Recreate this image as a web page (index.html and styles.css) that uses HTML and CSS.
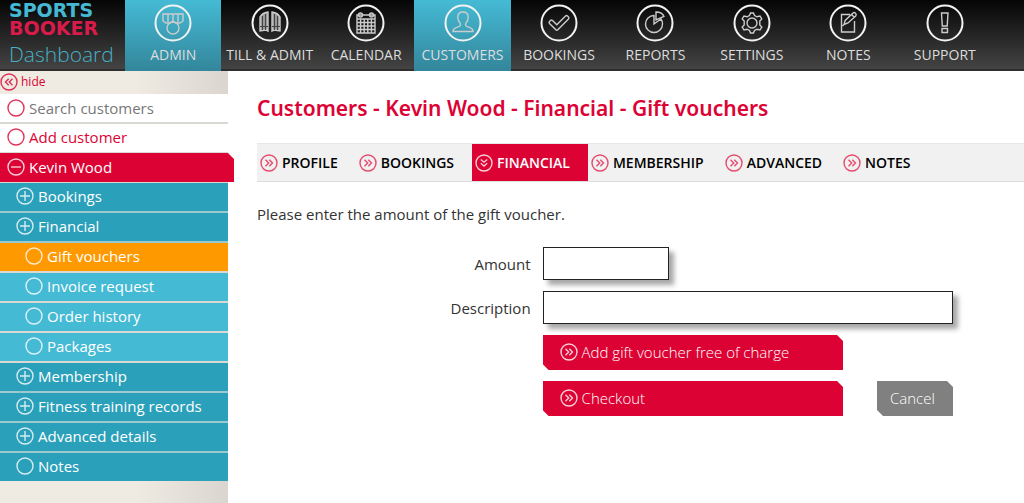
FILE: index.html
```html
<!DOCTYPE html>
<html lang="en">
<head>
  <meta charset="UTF-8" />
  <meta name="viewport" content="width=device-width, initial-scale=1.0"/>
  <title>Sports Booker Dashboard - Gift vouchers</title>
  <link rel="stylesheet" href="styles.css">
</head>
<body>
  <!-- shared icons -->
  <svg width="0" height="0" class="sprite" aria-hidden="true">
    <symbol id="ring" viewBox="0 0 18 18"><circle cx="9" cy="9" r="8"/></symbol>
    <symbol id="plus" viewBox="0 0 18 18"><circle cx="9" cy="9" r="8"/><path d="M4 9h10M9 4v10"/></symbol>
    <symbol id="minus" viewBox="0 0 18 18"><circle cx="9" cy="9" r="8"/><path d="M4 9h10"/></symbol>
    <symbol id="right" viewBox="0 0 18 18"><circle cx="9" cy="9" r="8"/><path d="M5.5 5.8L8.7 9l-3.2 3.2M9.3 5.8L12.5 9l-3.2 3.2"/></symbol>
    <symbol id="left" viewBox="0 0 18 18"><circle cx="9" cy="9" r="8"/><path d="M8.7 5.8L5.5 9l3.2 3.2M12.5 5.8L9.3 9l3.2 3.2"/></symbol>
    <symbol id="down" viewBox="0 0 18 18"><circle cx="9" cy="9" r="8"/><path d="M5.8 5.5L9 8.2l3.2-2.7M5.8 9.3L9 12l3.2-2.7"/></symbol>
  </svg>

  <header class="topbar">
    <a href="#" class="brand">
      <span class="sports">SPORTS</span>
      <span class="booker">BOOKER</span>
      <span class="dashboard">Dashboard</span>
    </a>
    <nav class="topnav">
      <a href="#" class="active">
        <svg viewBox="0 0 38 38"><circle class="rim" cx="19" cy="19" r="17.5"/><path d="M9 10h20v7l-3 2h-4l-3-2-3 2h-4l-3-2zM14 10v8M19 10v7M24 10v8"/><circle cx="19" cy="24" r="6"/></svg>
        ADMIN
      </a>
      <a href="#">
        <svg viewBox="0 0 38 38"><circle class="rim" cx="19" cy="19" r="17.5"/><path class="door" d="M9 27V13q2-4 8-5v19l-2-1zM29 27V13q-2-4-8-5v19l2-1z"/><path class="dark" d="M11.500 12v14M14.500 10v16M23.500 10v16M26.500 12v14M9 22.500h8M21 22.500h8"/></svg>
        TILL &amp; ADMIT
      </a>
      <a href="#">
        <svg viewBox="0 0 38 38"><circle class="rim" cx="19" cy="19" r="17.5"/><path d="M10 11h18v18H10zM10 15h18M10 18.500h18M10 22h18M10 25.500h18M13.600 15v14M17.200 15v14M20.800 15v14M24.400 15v14"/><circle cx="13.500" cy="11" r="2"/><circle cx="24.500" cy="11" r="2"/></svg>
        CALENDAR
      </a>
      <a href="#" class="active">
        <svg viewBox="0 0 38 38"><circle class="rim" cx="19" cy="19" r="17.5"/><path d="M9 27.500c0-3 2-3.800 5-4.600 2.500-.7 3-1.900 2-3.900-2-2-2.200-4-2.200-6 0-3.500 2-5 5.200-5s5.200 1.500 5.200 5c0 2-.2 4-2.200 6-1 2-.5 3.200 2 3.900 3 .8 5 1.600 5 4.600z"/></svg>
        CUSTOMERS
      </a>
      <a href="#">
        <svg viewBox="0 0 38 38"><circle class="rim" cx="19" cy="19" r="17.5"/><path d="M9.500 19.500q-1-1 0-2l1-1q1-1 2 0l4.300 4.300 8.700-8.700q1-1 2 0l1 1q1 1 0 2L17.800 25.800q-1 1-2 0z"/></svg>
        BOOKINGS
      </a>
      <a href="#">
        <svg viewBox="0 0 38 38"><circle class="rim" cx="19" cy="19" r="17.5"/><path d="M18 11.500a8.500 8.500 0 1 0 8.500 8.500q0-3-1.500-5L18 20z"/><path d="M20 16V8c4 0 7 2 8 4.500z"/></svg>
        REPORTS
      </a>
      <a href="#">
        <svg viewBox="0 0 38 38"><circle class="rim" cx="19" cy="19" r="17.5"/><path d="M16.500 11.500l1-2.500h3l1 2.500 2.500 1.300 3-.8 1.800 3-2 2v4l2 2-1.800 3-3-.8-2.500 1.300-1 2.500h-3l-1-2.500-2.500-1.300-3 .8-1.800-3 2-2v-4l-2-2 1.800-3 3 .8z"/><circle cx="19" cy="19" r="5"/></svg>
        SETTINGS
      </a>
      <a href="#">
        <svg viewBox="0 0 38 38"><circle class="rim" cx="19" cy="19" r="17.5"/><path d="M21 10.500h-8.500v17.500h13V17M15 20.500l1.200-4L24 9q1.200-1 2.500.3t.2 2.700L19 19zM22.500 10.500l2.800 2.800M13.500 22l1.500-1.500"/></svg>
        NOTES
      </a>
      <a href="#">
        <svg viewBox="0 0 38 38"><circle class="rim" cx="19" cy="19" r="17.5"/><path d="M15.500 9h6.500l-.8 13h-4.900zM16 24.500h5.500v4H16z"/></svg>
        SUPPORT
      </a>
    </nav>
  </header>

  <div class="layout">
    <aside class="sidebar">
      <a href="#" class="hide"><svg><use href="#left"/></svg>hide</a>
      <div class="row search">
        <svg><use href="#ring"/></svg>
        <input type="text" placeholder="Search customers" aria-label="Search customers">
      </div>
      <a href="#" class="row add"><svg><use href="#ring"/></svg>Add customer</a>
      <a href="#" class="row current"><svg><use href="#minus"/></svg>Kevin Wood</a>
      <a href="#" class="row level1"><svg><use href="#plus"/></svg>Bookings</a>
      <a href="#" class="row level1"><svg><use href="#plus"/></svg>Financial</a>
      <a href="#" class="row level2 selected"><svg><use href="#ring"/></svg>Gift vouchers</a>
      <a href="#" class="row level2"><svg><use href="#ring"/></svg>Invoice request</a>
      <a href="#" class="row level2"><svg><use href="#ring"/></svg>Order history</a>
      <a href="#" class="row level2"><svg><use href="#ring"/></svg>Packages</a>
      <a href="#" class="row level1"><svg><use href="#plus"/></svg>Membership</a>
      <a href="#" class="row level1"><svg><use href="#plus"/></svg>Fitness training records</a>
      <a href="#" class="row level1"><svg><use href="#plus"/></svg>Advanced details</a>
      <a href="#" class="row level1"><svg><use href="#ring"/></svg>Notes</a>
    </aside>

    <main class="content">
      <h1>Customers - Kevin Wood - Financial - Gift vouchers</h1>
      <nav class="tabs">
        <a href="#"><svg><use href="#right"/></svg>PROFILE</a>
        <a href="#"><svg><use href="#right"/></svg>BOOKINGS</a>
        <a href="#" class="active"><svg><use href="#down"/></svg>FINANCIAL</a>
        <a href="#"><svg><use href="#right"/></svg>MEMBERSHIP</a>
        <a href="#"><svg><use href="#right"/></svg>ADVANCED</a>
        <a href="#"><svg><use href="#right"/></svg>NOTES</a>
      </nav>
      <p>Please enter the amount of the gift voucher.</p>
      <form class="voucher">
        <label for="amount">Amount</label>
        <input type="text" id="amount" class="short">
        <label for="description">Description</label>
        <input type="text" id="description">
        <div class="actions">
          <button type="button" class="free"><svg><use href="#right"/></svg>Add gift voucher free of charge</button>
          <button type="submit" class="checkout"><svg><use href="#right"/></svg>Checkout</button>
          <button type="button" class="cancel">Cancel</button>
        </div>
      </form>
    </main>
  </div>
</body>
</html>
```
FILE: styles.css
```css
* {
  box-sizing: border-box;
}
body {
  margin: 0;
  min-height: 100vh;
  display: flex;
  flex-direction: column;
  font-family: "Open Sans", sans-serif;
  font-size: 15px;
  color: #333;
  background: #fff;
}
a {
  color: inherit;
  text-decoration: none;
}
svg {
  flex: none;
  width: 18px;
  height: 18px;
  fill: none;
  stroke: currentColor;
  stroke-width: 1.4;
}
.sprite {
  position: absolute;
  width: 0;
  height: 0;
}

/* top bar */
.topbar {
  display: flex;
  height: 71px;
  background: linear-gradient(#050505, #444);
  border-bottom: 2px solid #302d2f;
}
.brand {
  width: 125px;
  padding: 1px 0 0 9px;
  display: flex;
  flex-direction: column;
}
.sports,
.booker {
  font-family: "DejaVu Sans", sans-serif;
  font-weight: bold;
  font-size: 19px;
  line-height: 18px;
}
.sports {
  color: #45b9d3;
}
.booker {
  color: #d81b4a;
}
.dashboard {
  font-size: 21px;
  font-weight: 300;
  line-height: 34px;
  color: #45b0c6;
}
.topnav {
  flex: 1;
  display: grid;
  grid-template-columns: repeat(9, 1fr);
  padding-right: 31px;
}
.topnav a {
  display: flex;
  flex-direction: column;
  align-items: center;
  height: 71px;
  padding-top: 4px;
  font-size: 14px;
  line-height: 25px;
  color: #ddd;
  white-space: nowrap;
}
.topnav a.active {
  background: linear-gradient(#45bad4, #33869b);
}
.topnav svg {
  width: 38px;
  height: 38px;
  stroke: #ccc;
  stroke-width: 1.4;
}
.topnav .rim {
  stroke: #f2f2f2;
  stroke-width: 2;
}
.topnav .door {
  fill: #999;
}
.topnav .dark {
  stroke: #444;
  stroke-width: 1;
}

/* sidebar */
.layout {
  flex: 1;
  display: flex;
}
.sidebar {
  flex: none;
  width: 228px;
  background: linear-gradient(to right, #efebe3 60%, #dad6cf);
}
.sidebar svg,
.tabs svg,
.actions svg {
  opacity: 0.8;
}
.hide {
  display: flex;
  align-items: center;
  gap: 3px;
  height: 23px;
  padding-bottom: 2px;
  font-size: 12px;
  color: #dc0334;
}
.row {
  display: flex;
  align-items: center;
  gap: 4px;
  height: 30px;
  padding: 0 0 2px 7px;
  border-bottom: 2px solid #dad8d2;
  color: #fff;
}
.search,
.add {
  background: #fff;
  color: #dc0334;
}
.search {
  padding-bottom: 0;
}
.add {
  height: 29px;
  padding-bottom: 3px;
  border-bottom-width: 1px;
}
.search input {
  flex: 1;
  min-width: 0;
  padding: 0;
  border: 0;
  font: inherit;
  background: none;
}
.search input::placeholder {
  color: #777;
}
.current {
  width: 234px;
  background: #dc0334;
  clip-path: polygon(0 0, 228px 0, 100% 6px, 100% 29px, 228px 29px, 228px 100%, 0 100%);
  border-bottom-width: 1px;
  padding-bottom: 1px;
}
.level1 {
  padding-left: 16px;
  background: #2ba0ba;
  border-color: #9cc8cf;
}
.level2 {
  padding-left: 25px;
  background: #45bad4;
}
.selected {
  background: #ff9900;
}
.row:last-child {
  height: 28px;
  border-bottom: 0;
}

/* content */
.content {
  flex: 1;
  min-width: 0;
  padding-left: 29px;
}
h1 {
  margin: 22px 0 20px;
  font-family: "Noto Sans", sans-serif;
  font-size: 21px;
  line-height: 30px;
  font-weight: 600;
  color: #dc0334;
}
.tabs {
  display: flex;
  background: #f1f1f1;
  border-top: 1px solid #e8e8e8;
  border-bottom: 1px solid #ddd;
}
.tabs a {
  display: flex;
  align-items: center;
  gap: 4px;
  height: 37px;
  padding: 0 18px 0 3px;
  font-size: 14px;
  font-weight: 600;
  color: #000;
}
.tabs svg {
  color: #e4244f;
}
.tabs .active,
.tabs .active svg {
  background: #dc0334;
  color: #fff;
}
p {
  margin: 19px 0 20px;
  line-height: 26px;
}
.voucher {
  display: grid;
  grid-template-columns: 2fr 3fr;
  gap: 11px 12px;
  max-width: 696px;
  align-items: center;
}
.voucher label {
  text-align: right;
}
.voucher input {
  width: 100%;
  height: 33px;
  padding: 0 8px;
  border: 1px solid #222;
  font: inherit;
  box-shadow: 5px 5px 5px rgba(0, 0, 0, 0.35);
}
.voucher .short {
  width: 126px;
}
.actions {
  grid-column: 2;
  display: grid;
  grid-template-columns: 1fr 76px;
  gap: 11px 34px;
}
.actions button {
  display: flex;
  align-items: center;
  gap: 4px;
  height: 35px;
  padding: 0 17px 1px;
  border: 0;
  font: inherit;
  font-weight: 300;
  color: #fff;
  background: #dc0334;
  clip-path: polygon(0 0, calc(100% - 6px) 0, 100% 6px, 100% 100%, 6px 100%, 0 calc(100% - 6px));
  cursor: pointer;
}
.actions .free {
  grid-column: 1;
}
.actions .checkout {
  grid-row: 2;
}
.actions .cancel {
  grid-row: 2;
  padding: 0 13px 1px;
  background: #808080;
}
```
